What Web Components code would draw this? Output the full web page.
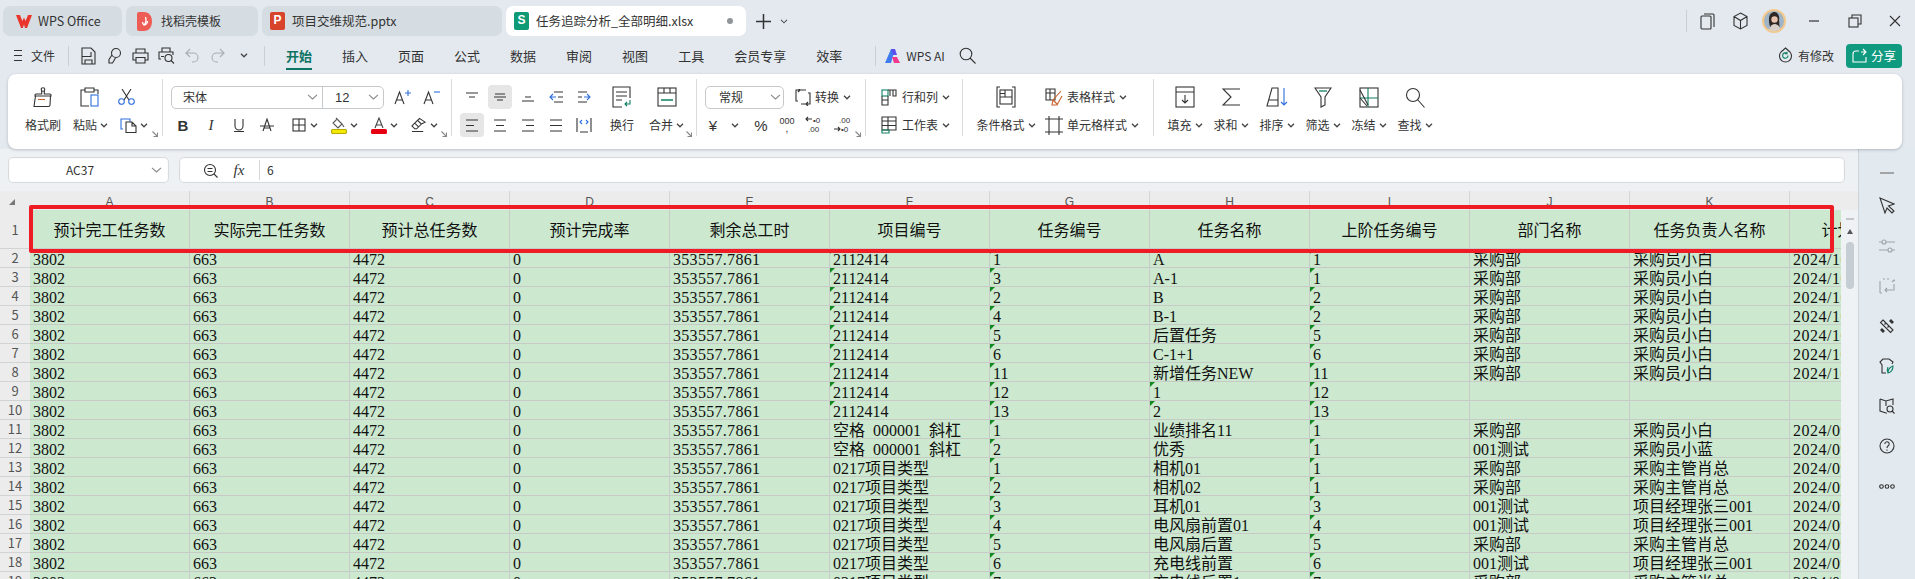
<!DOCTYPE html>
<html lang="zh">
<head>
<meta charset="utf-8">
<title>任务追踪分析_全部明细.xlsx</title>
<style>
  html, body { margin: 0; padding: 0; overflow: hidden; background: #e3e9ef; }
  body { font-family: "Noto Sans CJK SC", sans-serif; }
</style>
</head>
<body>
<wps-app>
  <wps-tabbar></wps-tabbar>
  <wps-menubar></wps-menubar>
  <wps-ribbon></wps-ribbon>
  <wps-main>
    <wps-formula cell="AC37" value="6"></wps-formula>
    <wps-sheet></wps-sheet>
    <wps-side slot="side"></wps-side>
  </wps-main>
</wps-app>
<script>
const FONT = '"Noto Sans CJK SC", sans-serif';
const svg = (w, h, body, extra = '') =>
  `<svg width="${w}" height="${h}" viewBox="0 0 ${w} ${h}" fill="none" stroke="#333" stroke-width="1.1" ${extra}>${body}</svg>`;
const BLUE = '#2f6fdc', GREEN = '#0e7f62';
const chev = svg(8, 5, '<polyline points="1,0.8 4,3.8 7,0.8" stroke="#444" stroke-width="1.3"/>');
const selChev = svg(11, 6, '<polyline points="1,0.8 5.5,5 10,0.8" stroke="#8a8a8a"/>');

const icons = {
  // tabs
  wps: svg(16, 13, '<path d="M0 0h4l2.4 6L8 2.4 9.6 6 12 0h4l-5 13H9L8 9.6 6.800 13H5z" fill="#e9352b" stroke="none"/>'),
  daoke: svg(15, 19, '<path d="M2 0h5c5 0 8 4 8 9.500S12 19 7 19H2a2 2 0 0 1-2-2V2a2 2 0 0 1 2-2z" fill="#ee5d55" stroke="none"/><path d="M8.500 5c1 3 .5 6-1.500 8-1-1-1.500-2-1.500-3M10.500 9c0 2-1.500 4-3.500 4" stroke="#fff" stroke-width="1.3"/>'),
  // menu row
  save: svg(15, 18, '<path d="M1 1h9l4 4v12H1zM1 9.500h9V5M4 17v-4h7v4"/>'),
  pen: svg(15, 18, '<circle cx="9" cy="6" r="4.500"/><path d="M5 8l-3 4.500v3.500h3.500l3-5"/>'),
  print: svg(17, 16, '<path d="M4 5V1h9v4M4 12H1V5h15v7h-3M4 9.500h9V15H4z"/>'),
  preview: svg(17, 17, '<path d="M4 5V1h8v4M3 12H1V5h14v3M3 9.500h3"/><circle cx="10.500" cy="11" r="3.500"/><path d="M13 13.500l3 3"/>'),
  undo: svg(14, 15, '<path d="M5 1L1 5h7.500a4.500 4.500 0 0 1 0 9H7M1 5l4 4" stroke="#a9aeb2"/>'),
  redo: svg(14, 15, '<path d="M9 1l4 4H5.500a4.500 4.500 0 0 0 0 9H7M13 5l-4 4" stroke="#a9aeb2"/>'),
  aiLogo: svg(16, 14, '<path d="M0 14L6 0h4L6 14z" fill="#3e7cf0" stroke="none"/><path d="M6 0h4l2 6H8z" fill="#5a4ff0" stroke="none"/><path d="M7 8h5l3 6H9z" fill="#f0388e" stroke="none"/>'),
  search: svg(17, 17, '<circle cx="7" cy="7" r="5.800"/><path d="M11 11l5.500 5.500"/>'),
  cloud: svg(17, 17, '<path d="M8.500 1l4.500 4a6 6 0 1 1-9 0z"/><path d="M11 8.500a2.700 2.700 0 1 1-1-2.100M10 4.800v2h-2" stroke="#0e7f62"/>'),
  share: svg(15, 15, '<path d="M9 4h5M11 1l3 3-3 3M14 9v5H1V6a3 3 0 0 1 3-3h3" stroke="#fff"/>'),
  // window
  pages: svg(15, 17, '<rect x="1" y="3" width="10" height="13" rx="1"/><path d="M4 1h9a1 1 0 0 1 1 1v12"/>'),
  cube: svg(15, 18, '<path d="M7.500 1l6.500 3.500v9L7.500 17 1 13.500v-9zM1 4.500l6.500 4 6.500-4M7.500 8.500V17"/>'),
  avatar: svg(24, 24, '<circle cx="12" cy="12" r="11" fill="#9fb4c6" stroke="#f3c98b" stroke-width="2"/><path d="M7 10c0-5 3-7 5.500-7S18 6 17 11c.5 3 0 6 1 8l-4 2H9c-1-4-2.500-7-2-11z" fill="#2f2726" stroke="none"/><circle cx="12.500" cy="10.500" r="3.200" fill="#e8c4b0" stroke="none"/><path d="M7 21c1-4 3-6 5.500-6s5 2 6 5a11 11 0 0 1-11.500 1z" fill="#d8cfc8" stroke="none"/>'),
  min: svg(12, 2, '<path d="M1 1h10" stroke="#333" stroke-width="1.200"/>'),
  max: svg(14, 14, '<rect x="1" y="4" width="9" height="9"/><path d="M4 4V1h9v9h-3"/>'),
  close: svg(12, 12, '<path d="M1 1l10 10M11 1L1 11"/>'),
  // ribbon clipboard
  brush: svg(20, 21, '<circle cx="10" cy="2.500" r="1.800"/><path d="M8.700 4v3H3a1 1 0 0 0-1 1v1h16V8a1 1 0 0 0-1-1h-5.700V4"/><path d="M2.500 9L1 19.500h14.500c1 0 1.500-.5 1.500-1.500L17.500 9"/><path d="M5 12.500h7" stroke="#c8612a"/>'),
  paste: svg(20, 20, '<path d="M5 3H1v16h8M14 3h4v4"/><path d="M5 1h9v4H5z"/><rect x="11" y="8" width="7" height="11" stroke="#2f6fdc"/>'),
  cut: svg(17, 16, `<path d="M4 0l7 11M13 0L6 11"/><circle cx="3.500" cy="12.500" r="2.800" stroke="${BLUE}"/><circle cx="13.500" cy="12.500" r="2.800" stroke="${BLUE}"/>`),
  pasteSp: svg(17, 15, `<path d="M3 11H1V1h9v3" stroke="${BLUE}"/><path d="M6 4h6l4 4v6.500H6zM12 4v4h4"/>`),
  corner: svg(6, 6, '<path d="M0.500 0.500l5 5M5.500 1.500v4h-4" stroke="#888"/>'),
  // font
  grow: svg(18, 16, `<path d="M1 15L5.500 3 10 15M2.500 11h6"/><path d="M11 4h6M14 1v6" stroke="${BLUE}"/>`),
  shrink: svg(18, 16, `<path d="M1 15L5.500 3 10 15M2.500 11h6"/><path d="M11 3h6" stroke="${BLUE}"/>`),
  under: svg(12, 14, '<path d="M2 1v7a4 4 0 0 0 8 0V1M1 13.500h10"/>'),
  strike: svg(14, 14, '<path d="M3 13L7 1l4 12M0 8h14M4.500 10h5"/>'),
  border: svg(14, 14, '<rect x="1" y="1" width="12" height="12"/><path d="M7 1v12M1 7h12"/>'),
  fill: svg(16, 17, '<path d="M6 2l5 5-4 4-5-5zM6 2l-1-1M11 7l2 3" stroke="#555"/><rect x="0.500" y="12.500" width="15" height="4" rx="1.500" fill="#f2ea00" stroke="#b8a900"/>'),
  fontc: svg(16, 17, '<path d="M4 11L8 1l4 10M5.300 8h5.400" stroke="#444"/><rect x="0" y="12" width="16" height="5" rx="1.500" fill="#e60012" stroke="none"/>'),
  eraser: svg(17, 16, '<path d="M1 9l6-6 4 4-5 5H4zM4 6l4 4M7 3l2-2 6 4-4 2M1 15h12"/>'),
  // align
  alTop: svg(14, 10, '<path d="M1 1h12M4 5h6"/>'),
  alMid: svg(14, 10, '<path d="M2 2h10M1 5h12M4 8h6"/>'),
  alBot: svg(14, 10, '<path d="M4 5h6M1 9h12"/>'),
  indL: svg(14, 12, `<path d="M5 1h9M5 11h9M9 6h5"/><path d="M7 6H1M4 3L1 6l3 3" stroke="${BLUE}"/>`),
  indR: svg(14, 12, `<path d="M1 1h9M1 11h9M1 6h4"/><path d="M7 6h6M10 3l3 3-3 3" stroke="${BLUE}"/>`),
  left: svg(14, 13, '<path d="M1 1h12M1 6.500h8M1 12h12"/>'),
  center: svg(14, 13, '<path d="M1 1h12M3 6.500h8M1 12h12"/>'),
  right: svg(14, 13, '<path d="M1 1h12M5 6.500h8M1 12h12"/>'),
  just: svg(14, 13, '<path d="M1 1h12M1 6.500h12M1 12h12"/>'),
  dist: svg(16, 16, `<path d="M1 1v14M15 1v14M4 15h8"/><path d="M6 3L4 5l2 2M10 3l2 2-2 2" stroke="${BLUE}"/>`),
  wrap: svg(20, 22, `<path d="M18 12V1H1v20h9M4 6h11M4 10h11M4 14h6"/><path d="M18 14v4h-5M15 16l-2 2 2 2" stroke="${GREEN}"/>`),
  merge: svg(20, 20, `<rect x="1" y="1" width="18" height="18"/><path d="M1 6h18M7 1v5M13 1v5"/><path d="M4 13h12" stroke="${GREEN}" stroke-width="1.500"/>`),
  conv: svg(16, 17, '<path d="M5 1H1v11h2M5 1L3 3M5 1L3 -1M11 15h4V4h-2M11 15l2-2M11 15l2 2M4 1h7M6 15h5"/>'),
  // cells
  rowcol: svg(16, 17, `<rect x="1" y="1" width="6" height="6" stroke="${GREEN}"/><path d="M7 1h8v6h-3V1M9 1v6"/><path d="M1 7v9h6V7M1 11h6"/>`),
  sheet: svg(16, 18, `<path d="M1 1h14v13H1zM1 5h14M7 1v13M1 9.500h14"/><path d="M1 14h7v3H1z" stroke="${GREEN}"/>`),
  cond: svg(20, 22, '<path d="M4 1H1v20h3M16 1h3v20h-3"/><rect x="4" y="4" width="12" height="14"/><path d="M4 11h12M9 4v7M4 7.500h5"/>'),
  tblSty: svg(18, 18, `<path d="M1 1h9v11H1zM1 5h9M5 1v11"/><path d="M16 3l-8 9-1 5h5l5-9M8 12l4 4" stroke="#c8612a"/>`),
  cellSty: svg(18, 19, '<path d="M4 0v19M14 0v19M0 3h18M0 16h18"/>'),
  // edit
  fillI: svg(20, 22, '<rect x="1" y="1" width="18" height="20"/><path d="M1 6h18M10 9v8M7 14l3 3 3-3"/>'),
  sum: svg(19, 18, '<path d="M18 1H1l8 8-8 8h17"/>'),
  sort: svg(22, 20, `<path d="M1 19L6 1h6v18zM3 13h9"/><path d="M18 1v17M15 15l3 3 3-3" stroke="${BLUE}"/>`),
  filter: svg(18, 21, `<path d="M1 1h16l-6 9v8l-4 2V10z"/><path d="M5 4h8" stroke="${GREEN}" stroke-width="1.300"/>`),
  freeze: svg(20, 21, `<rect x="1" y="1" width="18" height="19"/><path d="M1 11h18M9 1v19" stroke="${GREEN}"/><path d="M1 3l8 15M1 11l7 8"/>`),
  find: svg(20, 21, '<circle cx="8" cy="8" r="6.500"/><path d="M12.500 12.500l7 8"/>'),
  // side panel
  dash: svg(14, 2, '<path d="M0 1h14" stroke="#8d8d8d" stroke-width="1.500"/>'),
  cursor: svg(16, 17, '<path d="M1 1l14 6-5.500 2L15 14l-2 2-5-5-2 5z"/>'),
  sliders: svg(16, 15, '<g stroke="#a0a5a9"><circle cx="5" cy="3" r="2"/><path d="M0 3h3M7 3h9"/><circle cx="11" cy="11" r="2"/><path d="M0 11h9M13 11h3"/></g>'),
  swap: svg(16, 17, '<g stroke="#a0a5a9"><path d="M1 3v12M1 1h0M4 1h2M8 1h2M15 2v1M15 6v6h-9M8 10l-2 2 2 2M13 4l2-2 2 2M1 15h2"/></g>'),
  tools: svg(16, 16, '<path d="M4 2l10 10-2.500 2.500-10-10zM7 5L5.500 6.500M10 8l-1.500 1.500"/><path d="M12 1l3 3-2 2-3-3zM1 12l3 3 2-2-3-3z" fill="#333" stroke="none"/>'),
  shirt: svg(16, 16, `<path d="M4 1h6l4 3-1 2M4 1L1 4l2 3v8h4"/><path d="M9 15c0-4 2-6 5-7 0 4-1 6-5 7zM9 15c-1-2-1-4 0-6" stroke="${GREEN}"/>`),
  book: svg(16, 16, '<path d="M1 1l6 2 7-2v6M1 1v12l6 2h1M7 3v5"/><circle cx="11" cy="11" r="3"/><path d="M13 13l2.500 2.500"/>'),
  help: svg(16, 16, '<circle cx="8" cy="8" r="7"/><path d="M5.800 6a2.200 2.200 0 1 1 3.500 1.800C8.500 8.400 8 8.800 8 10M8 11.500v1.200"/>'),
  dots: svg(16, 5, '<circle cx="2.500" cy="2.500" r="1.800"/><circle cx="8" cy="2.500" r="1.800"/><circle cx="13.500" cy="2.500" r="1.800"/>'),
  lens: svg(15, 15, '<circle cx="7" cy="7" r="5.500"/><path d="M11 11l3.500 3.500M4.500 5.500h5M4.500 8.500h5"/>'),
  fmtK: svg(20, 20, '<text x="10" y="9" font-size="9" text-anchor="middle" fill="#333" stroke="none" font-family="Liberation Sans">000</text><text x="10" y="17" font-size="10" text-anchor="middle" fill="#333" stroke="none" font-family="Liberation Sans">,</text>'),
  decUp: svg(20, 20, '<path d="M7 4H1M3 2L1 4l2 2" stroke="#333"/><text x="8" y="8" font-size="8" fill="#333" stroke="none" font-family="Liberation Sans">•0</text><text x="3" y="17" font-size="8" fill="#333" stroke="none" font-family="Liberation Sans">.00</text>'),
  decDn: svg(20, 20, '<text x="6" y="8" font-size="8" fill="#333" stroke="none" font-family="Liberation Sans">.00</text><path d="M1 14h6M5 12l2 2-2 2" stroke="#333"/><text x="8" y="17" font-size="8" fill="#333" stroke="none" font-family="Liberation Sans">•0</text>'),
};

class WpsApp extends HTMLElement {
  constructor() {
    super();
    this.attachShadow({mode: 'open'}).innerHTML = `
    <style>
      :host { display: flex; flex-direction: column; width: 1915px; height: 579px; overflow: hidden;
        background: #e3e9ef; font-family: ${FONT}; color: #333; }
    </style>
    <slot></slot>`;
  }
}

class WpsTabbar extends HTMLElement {
  constructor() {
    super();
    this.attachShadow({mode: 'open'}).innerHTML = `
    <style>
      :host { display: flex; align-items: center; height: 30px; margin-top: 6px; padding: 0 3px; gap: 4px; box-sizing: border-box; }
      .tab { height: 30px; box-sizing: border-box; border-radius: 7px; background: #d6dde2; display: flex; align-items: center; padding-left: 8px; white-space: nowrap; line-height: 18px; font-size: 12.5px; flex: none; }
      .ic { width: 22px; display: flex; flex: none; }
      .on { background: #fff; }
      .sq { width: 15px; height: 18px; border-radius: 2px; color: #fff; font: bold 12px/17px "Liberation Sans", sans-serif; text-align: center; display: block; }
      .dot { width: 6px; height: 6px; border-radius: 50%; background: #8f9598; margin-left: auto; margin-right: 13px; }
      .plus { margin-left: 6px; display: flex; align-items: center; gap: 9px; }
      .right { margin-left: auto; display: flex; align-items: center; margin-right: 11px; }
      .sep { width: 1px; height: 22px; background: #c9d0d5; margin-right: 13px; }
      .right span:not(.sep) { display: flex; }
    </style>
    <div class="tab" style="width:119px;padding-left:13px"><span class="ic">${icons.wps}</span>WPS Office</div>
    <div class="tab" style="width:132px;padding-left:11px"><span class="ic" style="width:24px">${icons.daoke}</span><span style="font-size:12px">找稻壳模板</span></div>
    <div class="tab" style="width:240px"><span class="ic"><span class="sq" style="background:#d8432b">P</span></span>项目交维规范.pptx</div>
    <div class="tab on" style="width:240px"><span class="ic"><span class="sq" style="background:#0d9a74">S</span></span>任务追踪分析_全部明细.xlsx<span class="dot"></span></div>
    <div class="plus">${svg(15, 15, '<path d="M7.500 0v15M0 7.500h15" stroke="#333" stroke-width="1.500"/>')}${svg(8, 5, '<polyline points="1,0.8 4,3.8 7,0.8" stroke="#555" stroke-width="1.100"/>')}</div>
    <div class="right">
      <span class="sep"></span>
      <span style="width:33px">${icons.pages}</span>
      <span style="width:29px">${icons.cube}</span>
      <span style="width:46px">${icons.avatar}</span>
      <span style="width:40px">${icons.min}</span>
      <span style="width:41px">${icons.max}</span>
      <span>${icons.close}</span>
    </div>`;
  }
}

class WpsMenubar extends HTMLElement {
  constructor() {
    super();
    const tabs = ['开始', '插入', '页面', '公式', '数据', '审阅', '视图', '工具', '会员专享', '效率'];
    const qa = [icons.save, icons.pen, icons.print, icons.preview, icons.undo, icons.redo, chev]
      .map(i => `<span class="qa">${i}</span>`).join('');
    this.attachShadow({mode: 'open'}).innerHTML = `
    <style>
      :host { display: flex; align-items: center; height: 25px; margin-top: 7px; padding-left: 14px; font-size: 13px; line-height: 25px; box-sizing: border-box; }
      .burger { width: 8px; height: 9px; border-top: 1px solid #333; border-bottom: 1px solid #333; position: relative; margin-right: 9px; }
      .burger::after { content: ''; display: block; height: 1px; margin-top: 4px; background: #333; }
      .sep { width: 1px; height: 20px; background: #c9d0d5; flex: none; }
      .qa { width: 26px; display: flex; justify-content: center; }
      .t { margin-right: 30px; position: relative; white-space: nowrap; }
      .t.on { color: #0e7463; font-weight: 700; }
      .t.on::after { content: ''; position: absolute; left: 0; right: 0; bottom: -2px; height: 2px; background: #0e7463; }
      .end { margin-left: auto; display: flex; align-items: center; margin-right: 13px; }
      .share { width: 56px; height: 24px; margin-left: 12px; background: #109a7f; border-radius: 4px; color: #fff; display: flex; align-items: center; justify-content: center; gap: 4px; font-size: 12.5px; }
    </style>
    <span class="burger"></span>
    <span style="font-size:12px;margin-right:13px">文件</span>
    <span class="sep" style="margin-right:6px"></span>
    ${qa}
    <span class="sep" style="margin:0 21px 0 7px"></span>
    ${tabs.map((t, i) => `<span class="t ${i ? '' : 'on'}">${t}</span>`).join('')}
    <span class="sep" style="margin:0 9px 0 3px"></span>
    ${icons.aiLogo}
    <span style="margin-left:5px;font:12px 'Noto Sans CJK SC',sans-serif">WPS AI</span>
    <span style="margin-left:14px;display:flex">${icons.search}</span>
    <div class="end">
      ${icons.cloud}
      <span style="font-size:12px;margin-left:4px">有修改</span>
      <span class="share">${icons.share}分享</span>
    </div>`;
  }
}

class WpsRibbon extends HTMLElement {
  constructor() {
    super();
    const lbl = (t, arrow = true) => `<span class="lbl">${t}${arrow ? `<i>${chev}</i>` : ''}</span>`;
    const btn = (name, cls = '') => `<span class="b ${cls}">${icons[name]}</span>`;
    const chip = (name) => `<span class="chip"><span class="cb">${icons[name]}</span><i>${chev}</i></span>`;
    const large = (name, text, arrow = true, w = 46) => `<div class="lg" style="width:${w}px"><span class="ic">${icons[name]}</span>${lbl(text, arrow)}</div>`;
    const corner = `<span class="corner">${icons.corner}</span>`;
    const small = (name, text) => `<span class="sm"><span class="si">${icons[name]}</span>${text}<i>${chev}</i></span>`;
    this.attachShadow({mode: 'open'}).innerHTML = `
    <style>
      :host { display: flex; width: 1894px; height: 75px; margin: 6px 0 0 8px; padding-top: 5px; box-sizing: border-box; flex: none;
        background: #fff; border-radius: 8px; box-shadow: 0 1px 3px rgba(60,70,80,.3); font-size: 12px; line-height: 24px; color: #333; position: relative; z-index: 1; }
      .g { height: 57px; padding-top: 6px; box-sizing: border-box; border-right: 1px solid #d9dcde; display: flex; position: relative; flex: none; }
      .rows, .lg { display: grid; grid-template-rows: 24px 24px; row-gap: 4px; }
      .row { display: flex; align-items: center; height: 24px; }
      .lg { justify-items: center; flex: none; }
      .ic { display: flex; align-items: center; justify-content: center; height: 24px; }
      .lbl { display: flex; align-items: center; white-space: nowrap; }
      i { display: flex; font-style: normal; margin-left: 3px; }
      .b { width: 24px; height: 24px; margin: 0 2px; display: flex; align-items: center; justify-content: center; border-radius: 4px; flex: none; }
      .b.on { background: #e6e6e6; }
      .chip { width: 40px; display: flex; align-items: center; justify-content: center; flex: none; }
      .cb { width: 16px; display: flex; justify-content: center; }
      .corner { position: absolute; right: 4px; bottom: -1px; display: flex; }
      .font { width: 213px; height: 23px; box-sizing: border-box; border: 1px solid #c6c9cb; border-radius: 5px; display: flex; align-items: center; }
      .font .n { width: 151px; height: 100%; border-right: 1px solid #c6c9cb; display: flex; align-items: center; padding: 0 4px 0 11px; box-sizing: border-box; justify-content: space-between; }
      .font .s { flex: 1; display: flex; align-items: center; padding: 0 4px 0 12px; justify-content: space-between; font: 13px "Liberation Sans", sans-serif; }
      .sm { display: flex; align-items: center; height: 24px; white-space: nowrap; }
      .si { width: 18px; margin-right: 4px; display: flex; justify-content: center; }
      .sm i { margin-left: 4px; }
    </style>

    <div class="g" style="width:155px;padding-left:17px">
      ${large('brush', '格式刷', false, 36)}
      <div style="width:12px"></div>
      <div class="lg" style="width:33px;justify-items:start"><span class="ic" style="margin-left:7px">${icons.paste}</span>${lbl('粘贴')}</div>
      <div class="rows" style="margin-left:12px">
        <div class="row">${icons.cut}</div>
        <div class="row" style="padding-left:2px">${icons.pasteSp}<i style="margin-left:3px">${chev}</i></div>
      </div>
      ${corner}
    </div>

    <div class="g" style="width:289px;padding-left:8px">
      <div class="rows">
        <div class="row">
          <div class="font">
            <div class="n"><span>宋体</span>${selChev}</div>
            <div class="s"><span>12</span>${selChev}</div>
          </div>
          <span style="width:29px;margin-left:4px;display:flex;justify-content:center">${icons.grow}</span>
          <span style="width:29px;display:flex;justify-content:center">${icons.shrink}</span>
        </div>
        <div class="row" style="margin-left:-2px">
          <span class="b" style="font:bold 15px 'Liberation Sans',sans-serif">B</span>
          <span class="b" style="font:italic 15px 'Liberation Serif',serif">I</span>
          <span class="b">${icons.under}</span>
          <span class="b">${icons.strike}</span>
          <span style="margin-left:3px;display:flex">${chip('border')}${chip('fill')}${chip('fontc')}${chip('eraser')}</span>
        </div>
      </div>
      ${corner}
    </div>

    <div class="g" style="width:245px;padding-left:6px">
      <div class="rows">
        <div class="row">${btn('alTop')}${btn('alMid', 'on')}${btn('alBot')}${btn('indL')}${btn('indR')}</div>
        <div class="row">${btn('left', 'on')}${btn('center')}${btn('right')}${btn('just')}${btn('dist')}</div>
      </div>
      <div style="width:6px"></div>
      ${large('wrap', '换行', false, 36)}
      <div style="width:9px"></div>
      ${large('merge', '合并', true, 35)}
      ${corner}
    </div>

    <div class="g" style="width:169px;padding-left:8px">
      <div class="rows">
        <div class="row">
          <div class="font" style="width:79px;padding:0 2px 0 13px;justify-content:space-between">常规${selChev}</div>
          <span class="sm" style="margin-left:11px"><span class="si" style="width:16px">${icons.conv}</span>转换<i>${chev}</i></span>
        </div>
        <div class="row">
          <span style="width:16px;text-align:center;font:15px 'Liberation Sans',sans-serif">¥</span>
          <i style="margin-left:10px">${chev}</i>
          <span style="width:24px;margin-left:10px;text-align:center;font:15px 'Liberation Sans',sans-serif">%</span>
          <span class="b">${icons.fmtK}</span>
          <span class="b">${icons.decUp}</span>
          <span class="b">${icons.decDn}</span>
        </div>
      </div>
      ${corner}
    </div>

    <div class="g" style="width:97px;padding-left:14px">
      <div class="rows">
        ${small('rowcol', '行和列')}
        ${small('sheet', '工作表')}
      </div>
    </div>

    <div class="g" style="width:191px;padding-left:13px">
      ${large('cond', '条件格式', true, 60)}
      <div class="rows" style="margin-left:9px">
        ${small('tblSty', '表格样式')}
        ${small('cellSty', '单元格样式')}
      </div>
    </div>

    <div style="display:flex;height:57px;padding:6px 0 0 7px;box-sizing:border-box;margin-left:1px">
      ${large('fillI', '填充')}${large('sum', '求和')}${large('sort', '排序')}${large('filter', '筛选')}${large('freeze', '冻结')}${large('find', '查找')}
    </div>`;
  }
}

class WpsMain extends HTMLElement {
  constructor() {
    super();
    this.attachShadow({mode: 'open'}).innerHTML = `
    <style>
      :host { display: grid; grid-template-columns: 1858px 57px; grid-template-rows: 42px 1fr; flex: 1; min-height: 0; background: #eef1f4; }
      ::slotted(wps-formula) { grid-column: 1; grid-row: 1; }
      ::slotted(wps-sheet) { grid-column: 1; grid-row: 2; }
      ::slotted(wps-side) { grid-column: 2; grid-row: 1 / 3; }
    </style>
    <slot></slot><slot name="side"></slot>`;
  }
}

class WpsFormula extends HTMLElement {
  constructor() {
    super();
    this.attachShadow({mode: 'open'}).innerHTML = `
    <style>
      :host { display: flex; gap: 10px; padding: 8px 13px 0 8px; box-sizing: border-box; height: 42px; font-size: 12px; color: #333; }
      .box { height: 26px; box-sizing: border-box; background: #fff; border-radius: 5px; box-shadow: 0 0 1px 1px #d3d7da inset; display: flex; align-items: center; line-height: 26px; }
      .name { width: 161px; flex: none; position: relative; justify-content: center; padding-right: 17px; }
      .name svg { position: absolute; right: 7px; top: 10px; }
      .val { flex: 1; padding-left: 24px; }
      .fx { font: italic 15px "Liberation Serif", serif; width: 40px; text-align: center; margin-left: 1px; }
      .sep { width: 1px; height: 20px; background: #d3d7da; margin-right: 7px; }
    </style>
    <div class="box name"><span>${this.getAttribute('cell')}</span>${selChev}</div>
    <div class="box val">${icons.lens}<span class="fx">fx</span><span class="sep"></span><span>${this.getAttribute('value')}</span></div>`;
  }
}

const COLS = 'ABCDEFGHIJK'.split('');
const HEAD = ['预计完工任务数', '实际完工任务数', '预计总任务数', '预计完成率', '剩余总工时', '项目编号', '任务编号', '任务名称', '上阶任务编号', '部门名称', '任务负责人名称', '计划开始时间'];
const P1 = '2112414', S1 = '空格 000001 斜杠', T1 = '0217项目类型';
const BUY = '采购部', TEST = '001测试', XB = '采购员小白', XL = '采购员小蓝', XZ = '采购主管肖总', ZS = '项目经理张三001';
const D1 = '2024/10/10', D0 = '2024/09/10';
const DATA = [
  [P1, '1', 'A', '1', BUY, XB, D1],
  [P1, '3', 'A-1', '1', BUY, XB, D1],
  [P1, '2', 'B', '2', BUY, XB, D1],
  [P1, '4', 'B-1', '2', BUY, XB, D1],
  [P1, '5', '后置任务', '5', BUY, XB, D1],
  [P1, '6', 'C-1+1', '6', BUY, XB, D1],
  [P1, '11', '新增任务NEW', '11', BUY, XB, D1],
  [P1, '12', '1', '12', '', '', ''],
  [P1, '13', '2', '13', '', '', ''],
  [S1, '1', '业绩排名11', '1', BUY, XB, D0],
  [S1, '2', '优秀', '1', TEST, XL, D0],
  [T1, '1', '相机01', '1', BUY, XZ, D0],
  [T1, '2', '相机02', '1', BUY, XZ, D0],
  [T1, '3', '耳机01', '3', TEST, ZS, D0],
  [T1, '4', '电风扇前置01', '4', TEST, ZS, D0],
  [T1, '5', '电风扇后置', '5', BUY, XZ, D0],
  [T1, '6', '充电线前置', '6', TEST, ZS, D0],
  [T1, '7', '充电线后置1', '7', BUY, XZ, D0],
];

class WpsSheet extends HTMLElement {
  constructor() {
    super();
    const cell = (text, mark, cls = '') => `<div class="c ${cls} ${mark ? 'mk' : ''}">${text}</div>`;
    let body = `<div class="rh" style="line-height:39px">1</div>`;
    HEAD.forEach(h => body += `<div class="c hd">${h}</div>`);
    DATA.forEach((r, i) => {
      const numeric = /^\d+$/;
      body += `<div class="rh">${i + 2}</div>`;
      body += cell('3802') + cell('663') + cell('4472') + cell('0') + cell('353557.7861', false, 'dec');
      body += cell(r[0], numeric.test(r[0]), 'sp');
      body += cell(r[1], true);
      body += cell(r[2], numeric.test(r[2]));
      body += cell(r[3], true);
      body += cell(r[4]) + cell(r[5]) + cell(r[6], false, 'dec2');
    });
    this.attachShadow({mode: 'open'}).innerHTML = `
    <style>
      :host { display: block; position: relative; overflow: hidden; }
      .cols { display: flex; height: 19px; background: #ececec; font: 12px/22px "Liberation Sans", sans-serif; color: #555; }
      .cols div { width: 160px; box-sizing: border-box; border-right: 1px solid #d4d6d6; text-align: center; flex: none; }
      .cols .corner { width: 30px; border: 0; position: relative; }
      .corner::after { content: ''; position: absolute; left: 9px; top: 8px; border: 3px solid transparent; border-right-color: #777; border-bottom-color: #777; }
      .wrap { display: flex; height: 370px; }
      .clip { width: 1841px; overflow: hidden; flex: none; }
      .grid { display: grid; grid-template-columns: 30px repeat(12, 160px); grid-template-rows: 39px; grid-auto-rows: 19px; width: 1950px;
        font: 16px/19px "Liberation Serif", "Noto Sans CJK SC", serif; color: #111; }
      .rh { background: #ececec; border-bottom: 1px solid #d2d4d4; box-sizing: border-box; text-align: center; color: #555;
        font: 13px/18px "Noto Sans CJK SC", sans-serif; }
      .c { background: #cce8cf; border-right: 1px solid #c8cac8; border-bottom: 1px solid #c8cac8; box-sizing: border-box;
        padding-left: 3px; white-space: nowrap; overflow: hidden; position: relative; line-height: 21px; }
      .dec { letter-spacing: .3px; }
      .dec2 { letter-spacing: .5px; }
      .sp { word-spacing: 4px; }
      .mk::before { content: ''; position: absolute; left: 0; top: 0; border-style: solid; border-width: 5px 5px 0 0; border-color: #0f8a1f transparent transparent transparent; }
      .grid .hd { text-align: center; padding: 3px 0 0; line-height: 36px; }
      .scroll { flex: 1; background: #eff2f5; display: flex; flex-direction: column; align-items: center; padding-top: 8px; }
      .up { width: 0; height: 0; border: 3.5px solid transparent; border-bottom: 5px solid #555; border-top: 0; margin-top: 9px; }
      .thumb { width: 8px; height: 47px; background: #c6cdd3; border-radius: 4px; margin-top: 8px; }
      .red { position: absolute; left: 29px; top: 14px; width: 1805px; height: 48px; box-sizing: border-box; border: 4px solid #ee1c25; border-radius: 2px; pointer-events: none; }
    </style>
    <div class="cols"><div class="corner"></div>${COLS.map(c => `<div>${c}</div>`).join('')}<div style="width:68px;border:0"></div></div>
    <div class="wrap">
      <div class="clip"><div class="grid">${body}</div></div>
      <div class="scroll">${icons.dash.replace('width="14"', 'width="8"')}<span class="up"></span><span class="thumb"></span></div>
    </div>
    <div class="red"></div>`;
  }
}

class WpsSide extends HTMLElement {
  constructor() {
    super();
    const list = ['dash', 'cursor', 'sliders', 'swap', 'tools', 'shirt', 'book', 'help', 'dots'];
    this.attachShadow({mode: 'open'}).innerHTML = `
    <style>
      :host { display: flex; flex-direction: column; align-items: center; background: #e2e9ef; border-left: 1px solid #ccd3d9; box-sizing: border-box; height: 430px; padding-top: 16px; }
      span { display: flex; height: 40px; align-items: center; flex: none; }
      .first { height: 16px; margin-bottom: 4px; }
      .second { margin-bottom: 1px; }
    </style>
    ${list.map((n, i) => `<span class="${i === 0 ? 'first' : i === 1 ? 'second' : ''}">${icons[n]}</span>`).join('')}`;
  }
}

customElements.define('wps-app', WpsApp);
customElements.define('wps-tabbar', WpsTabbar);
customElements.define('wps-menubar', WpsMenubar);
customElements.define('wps-ribbon', WpsRibbon);
customElements.define('wps-main', WpsMain);
customElements.define('wps-formula', WpsFormula);
customElements.define('wps-sheet', WpsSheet);
customElements.define('wps-side', WpsSide);
</script>
</body>
</html>
